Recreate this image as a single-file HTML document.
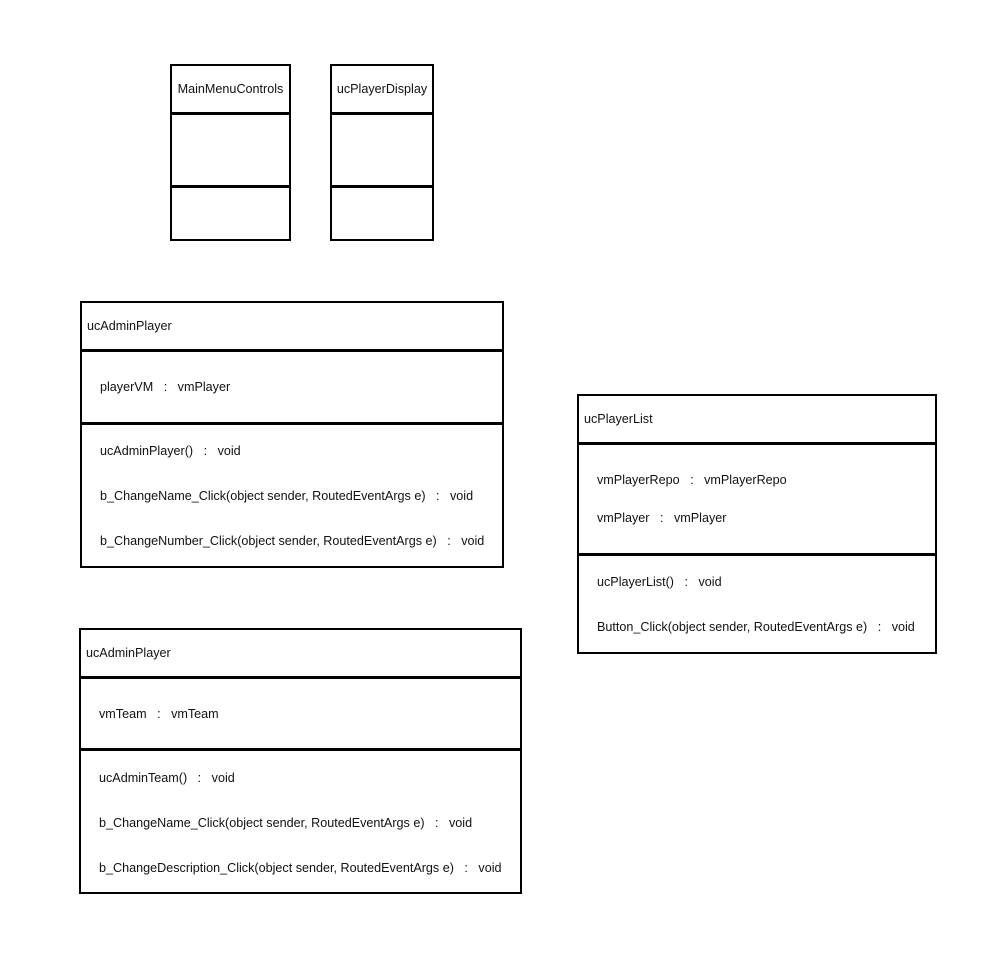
<!DOCTYPE html>
<html><head><style>
body{margin:0;width:986px;height:953px;background:#fff;position:relative;font-family:"Liberation Sans",sans-serif;font-size:12.6px;color:#111;overflow:hidden}
.b{position:absolute;border:2px solid #000;box-sizing:border-box}
.d{position:absolute;left:0;right:0;height:3px;background:#000}
.t{position:absolute;white-space:pre;line-height:14px}
</style></head><body>
<div class="b" style="left:170px;top:64px;width:121px;height:177px">
<div class="t" style="left:0;right:0;text-align:center;top:16px">MainMenuControls</div>
<div class="d" style="top:46px"></div><div class="d" style="top:119px"></div></div>
<div class="b" style="left:330px;top:64px;width:104px;height:177px">
<div class="t" style="left:0;right:0;text-align:center;top:16px">ucPlayerDisplay</div>
<div class="d" style="top:46px"></div><div class="d" style="top:119px"></div></div>

<div class="b" style="left:80px;top:301px;width:424px;height:267px">
<div class="t" style="left:5px;top:16px">ucAdminPlayer</div>
<div class="d" style="top:46px"></div><div class="d" style="top:119px"></div>
<div class="t" style="left:18px;top:77px">playerVM   :   vmPlayer</div>
<div class="t" style="left:18px;top:141px">ucAdminPlayer()   :   void</div>
<div class="t" style="left:18px;top:186px">b_ChangeName_Click(object sender, RoutedEventArgs e)   :   void</div>
<div class="t" style="left:18px;top:231px">b_ChangeNumber_Click(object sender, RoutedEventArgs e)   :   void</div>
</div>

<div class="b" style="left:577px;top:394px;width:360px;height:260px">
<div class="t" style="left:5px;top:16px">ucPlayerList</div>
<div class="d" style="top:46px"></div><div class="d" style="top:157px"></div>
<div class="t" style="left:18px;top:77px">vmPlayerRepo   :   vmPlayerRepo</div>
<div class="t" style="left:18px;top:115px">vmPlayer   :   vmPlayer</div>
<div class="t" style="left:18px;top:179px">ucPlayerList()   :   void</div>
<div class="t" style="left:18px;top:224px">Button_Click(object sender, RoutedEventArgs e)   :   void</div>
</div>

<div class="b" style="left:79px;top:628px;width:443px;height:266px">
<div class="t" style="left:5px;top:16px">ucAdminPlayer</div>
<div class="d" style="top:46px"></div><div class="d" style="top:118px"></div>
<div class="t" style="left:18px;top:77px">vmTeam   :   vmTeam</div>
<div class="t" style="left:18px;top:141px">ucAdminTeam()   :   void</div>
<div class="t" style="left:18px;top:186px">b_ChangeName_Click(object sender, RoutedEventArgs e)   :   void</div>
<div class="t" style="left:18px;top:231px">b_ChangeDescription_Click(object sender, RoutedEventArgs e)   :   void</div>
</div>
</body></html>
